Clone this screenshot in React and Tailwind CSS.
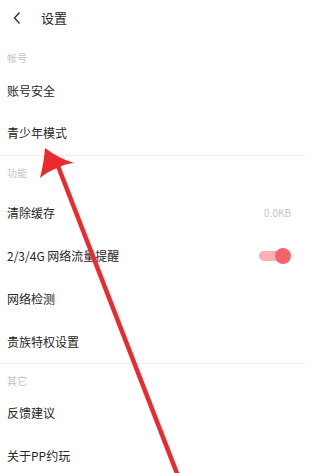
import React from 'react';

const font = { fontFamily: '"Noto Sans CJK SC", "Noto Sans", sans-serif' };

const Label = ({ children, className = '' }) => (
    <div className={`px-[7px] text-[10px] leading-[12px] text-[#c4c4c4] ${className}`}>{children}</div>
);

const Row = ({ children, right, className = 'h-[43px]' }) => (
    <div className={`flex items-center justify-between pl-[7px] pr-[29px] ${className}`}>
        <span className="text-[12px] text-[#262626]">{children}</span>
        {right}
    </div>
);

const Divider = () => <div className="mr-[15px] h-px bg-[#eeeeee]" />;

export default function App() {
    return (
        <div className="relative w-[320px] h-[473px] overflow-hidden bg-white" style={font}>
            {/* header */}
            <div className="flex h-[35px] items-center">
                <svg width="10" height="14" viewBox="0 0 10 14" className="ml-[12px]">
                    <path d="M7.5 1.5 L2.5 7 L7.5 12.5" fill="none" stroke="#333" strokeWidth="1.4" />
                </svg>
                <span className="ml-[19px] text-[13px] text-[#262626]">设置</span>
            </div>

            {/* 帐号 */}
            <Label className="h-[35px] pt-[17px]">帐号</Label>
            <Row className="h-[42px]">账号安全</Row>
            <Row className="h-[42px]">青少年模式</Row>
            <div className="h-px" />
            <Divider />

            {/* 功能 */}
            <Label className="h-[35px] pt-[11px]">功能</Label>
            <Row right={<span className="text-[10px] text-[#c4c4c4]">0.0KB</span>}>清除缓存</Row>
            <Row
                right={
                    <div className="relative flex h-[16px] w-[32px] items-center">
                        <div className="h-[10px] w-[28px] rounded-full bg-[#fbb0b3]" />
                        <div className="absolute right-0 top-0 h-[16px] w-[16px] rounded-full bg-[#f7636b]" />
                    </div>
                }
            >
                2/3/4G 网络流量提醒
            </Row>
            <Row>网络检测</Row>
            <Row>贵族特权设置</Row>
            <Divider />

            {/* 其它 */}
            <Label className="h-[27px] pt-[11px]">其它</Label>
            <Row>反馈建议</Row>
            <Row>关于PP约玩</Row>
            <Divider />

            {/* annotation arrow */}
            <svg className="pointer-events-none absolute inset-0" width="320" height="473" viewBox="0 0 320 473">
                <line x1="178" y1="476" x2="58" y2="166" stroke="#ea2a2c" strokeWidth="4.5" />
                <path d="M45 148 Q58 158 74 163 Q64 164 57 168 Q47 172 40 178 Q44 162 45 148 Z" fill="#ea2a2c" />
            </svg>
        </div>
    );
}
